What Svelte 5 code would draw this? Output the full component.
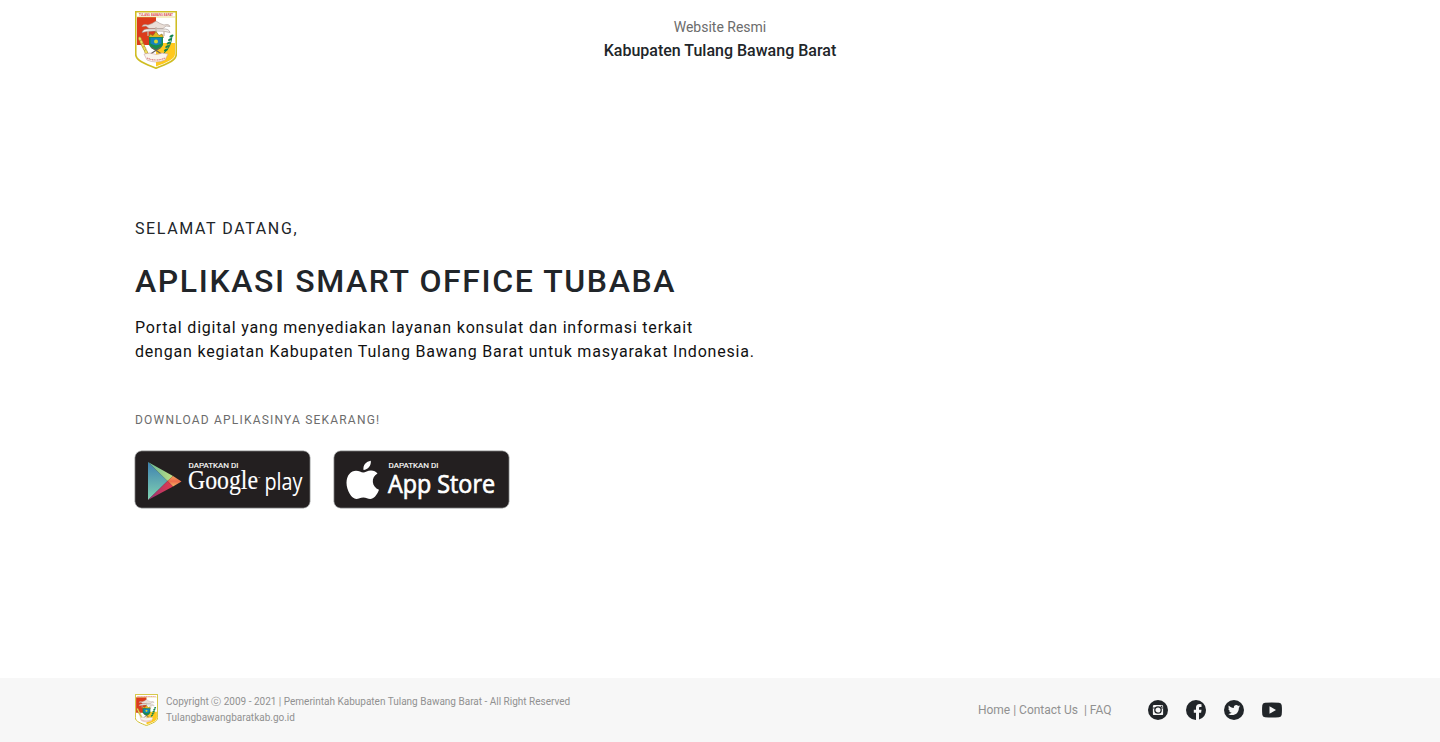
<script>
  const lines = [
    'Portal digital yang menyediakan layanan konsulat dan informasi terkait',
    'dengan kegiatan Kabupaten Tulang Bawang Barat untuk masyarakat Indonesia.'
  ];
  const leaves = [0, 1, 2, 3, 4];
</script>

{#snippet crest(cls)}
  <svg class={cls} viewBox="0 0 42 58" preserveAspectRatio="none" aria-label="Tulang Bawang Barat">
    <path d="M.7.7H41.3V43C41.3 50 31 53 21 57.2C11 53 .7 50 .7 43Z" fill="#fff" />
    <path d="M2 6H21V34H2Z" fill="#dc3b1c" />
    <path d="M21 32H40V43C40 48.5 31 51.5 21 55.5Z" fill="#ffc81c" />
    <text x="4" y="5" textLength="34" lengthAdjust="spacingAndGlyphs" class="crest-title">TULANG BAWANG BARAT</text>
    <path d="M2 6H40" stroke="#d9c943" stroke-width=".6" />
    <path d="M7 15.5Q8 12.5 13 14L17 12.5L21 10L25 12.5L29 14Q34 12.5 35 15.5L31 15L28 17.5H14L11 15Z" fill="#eadfd8" stroke="#a99a94" stroke-width=".6" />
    <path d="M7 21.5Q8 17.5 14 18H28Q34 17.5 35 21.5Q29 19.6 21 20Q13 19.6 7 21.5Z" fill="#f5f1ec" stroke="#9c8f8c" stroke-width=".6" />
    <path d="M13 20V25M29 20V25M21 16V24" stroke="#c8b8ab" stroke-width="1.3" />
    <path d="M13.5 26.5L15 23L18 24.5L21 20.5L24 24.5L27 23L28.5 26.5Z" fill="#e3b820" stroke="#806b24" stroke-width=".6" />
    <path d="M14 26H28V34Q26 38 21 39.5Q16 38 14 34Z" fill="#178b4e" />
    <path d="M15.5 26.8H26.5V32.5Q21 36 15.5 32.5Z" fill="#1684bc" />
    <circle cx="21" cy="30.5" r="2" fill="#d4d830" />
    <path d="M14 43Q6 37 5 27" fill="none" stroke="#d5c63d" stroke-width="1" />
    <path d="M28 43Q36 37 37 25" fill="none" stroke="#168454" stroke-width="1" />
    {#each leaves as n}
      <ellipse cx={5 + n * 1.5} cy={28 + n * 3.2} rx="1.4" ry="2.2" transform={`rotate(-24 ${5 + n * 1.5} ${28 + n * 3.2})`} fill="#f1df5c" stroke="#a08b2c" stroke-width=".5" />
      <ellipse cx={36.5 - n * 1.4} cy={25 + n * 3.5} rx="2.2" ry="1.2" transform={`rotate(-24 ${36.5 - n * 1.4} ${25 + n * 3.5})`} fill="#14834f" />
    {/each}
    <path d="M14 44L26 36M28 44L16 36" stroke="#6d6259" stroke-width="1.2" />
    <path d="M9 43L15 42Q21 45 27 42L33 43L30 49Q21 53 12 49Z" fill="#faf4ec" stroke="#c9a3a2" stroke-width=".6" />
    <path d="M12 47Q21 51 30 47" fill="none" stroke="#d98080" stroke-width="1.2" stroke-dasharray="1.2 .5" />
    <path d="M.7.7H41.3V43C41.3 50 31 53 21 57.2C11 53 .7 50 .7 43Z" fill="none" stroke="#cfbd22" stroke-width="1.7" />
  </svg>
{/snippet}

<div class="page">
  <header>
    {@render crest('logo')}
    <div class="official">
      <span>Website Resmi</span>
      <strong>Kabupaten Tulang Bawang Barat</strong>
    </div>
  </header>

  <main>
    <p class="welcome">SELAMAT DATANG,</p>
    <h1>APLIKASI SMART OFFICE TUBABA</h1>
    <p class="intro">{lines[0]}<br />{lines[1]}</p>
    <p class="download">DOWNLOAD APLIKASINYA SEKARANG!</p>
    <div class="stores">
      <svg class="badge" viewBox="0 0 177 59">
        <defs>
          <linearGradient id="blue" x2="0" y2="1"><stop stop-color="#3d7fb0" /><stop offset="1" stop-color="#82d4b2" /></linearGradient>
          <linearGradient id="green"><stop stop-color="#62b799" /><stop offset="1" stop-color="#c0df83" /></linearGradient>
          <linearGradient id="orange" x2="0" y2="1"><stop stop-color="#f2a35b" /><stop offset=".5" stop-color="#ee6b4b" /><stop offset="1" stop-color="#f5b565" /></linearGradient>
          <linearGradient id="pink"><stop stop-color="#963278" /><stop offset="1" stop-color="#e63c4c" /></linearGradient>
        </defs>
        <rect x=".8" y=".8" width="175.4" height="57.4" rx="7" fill="#231f20" stroke="#c9cccb" stroke-width=".7" />
        <path d="M14 12V50L33.5 31Z" fill="url(#blue)" />
        <path d="M14 12L39 26L33.5 31Z" fill="url(#green)" />
        <path d="M39 26L47.5 31.5L39 36.5L33.5 31Z" fill="url(#orange)" />
        <path d="M14 50L33.5 31L39 36.5Z" fill="url(#pink)" />
        <text class="get" x="54.5" y="17.9" textLength="50" lengthAdjust="spacingAndGlyphs">DAPATKAN DI</text>
        <text class="google" x="54" y="39.4" textLength="70" lengthAdjust="spacingAndGlyphs">Google</text>
        <text class="tm" x="124" y="29.5">™</text>
        <text class="play" x="130.5" y="39.5" textLength="38" lengthAdjust="spacingAndGlyphs">play</text>
      </svg>
      <svg class="badge" viewBox="0 0 177 59">
        <rect x=".8" y=".8" width="175.4" height="57.4" rx="7" fill="#231f20" stroke="#c9cccb" stroke-width=".7" />
        <path fill="#fff" d="M30.5 20C29.8 15.2 33.2 11.5 37.8 10.8C38.4 15.7 35 19.8 30.5 20ZM44.5 23.5C37.5 27.5 38.6 36.8 46 39.8C44 45.2 40.6 49 37.3 49C34.8 49 33.2 47.6 30.3 47.6C27.3 47.6 25.7 49 23.3 49C18.8 49 13.5 40.6 13.5 32.8C13.5 25.2 18 20.8 23 20.8C26 20.8 28.2 22.5 30.2 22.5C32.2 22.5 34.7 20.5 38 20.5C40.7 20.5 43 21.5 44.5 23.5Z" />
        <text class="get" x="55.5" y="17.9" textLength="50" lengthAdjust="spacingAndGlyphs">DAPATKAN DI</text>
        <text class="app" x="55" y="43" textLength="107" lengthAdjust="spacingAndGlyphs">App Store</text>
      </svg>
    </div>
  </main>

  <footer>
    {@render crest('mini')}
    <div class="copyright">Copyright ⓒ 2009 - 2021 | Pemerintah Kabupaten Tulang Bawang Barat - All Right Reserved<br />Tulangbawangbaratkab.go.id</div>
    <nav>Home | Contact Us&nbsp; | FAQ</nav>
    <div class="social">
      <svg viewBox="0 0 20 20"><circle cx="10" cy="10" r="10" fill="#212529" /><rect x="4.9" y="4.9" width="10.2" height="10.2" rx="1.2" fill="#f7f7f7" /><path d="M5 8H15" stroke="#212529" stroke-width=".9" /><circle cx="10" cy="10" r="3.2" fill="#f7f7f7" stroke="#212529" stroke-width="1.3" /><path d="M12.7 5.7H14.3V7.2H12.7Z" fill="#212529" /></svg>
      <svg viewBox="0 0 20 20"><path fill="#212529" d="M20 10A10 10 0 1 0 10 20V12.7H7.8V9.8H10V7.8C10 5.4 11.4 4.1 13.6 4.1L15.5 4.3V6.9H14.2C13.2 6.9 13 7.4 13 8.2V9.8H15.5L15.1 12.7H13V19.5A10 10 0 0 0 20 10Z" /></svg>
      <svg viewBox="0 0 20 20"><circle cx="10" cy="10" r="10" fill="#212529" /><path fill="#f7f7f7" d="M16 6.3L14.8 6.6C15.2 6.3 15.5 5.8 15.7 5.3L14.2 5.9C12.5 4.1 9.4 5.3 9.8 8C7.8 7.9 6 6.9 4.8 5.4C4.2 6.6 4.5 8 5.5 8.7L4.4 8.4C4.4 9.7 5.3 10.7 6.4 11L5.3 11.1C5.6 12.1 6.5 12.8 7.7 12.8C6.7 13.6 5.5 14 4.1 13.9C9.1 17 15 13.8 14.9 7.7Q15.6 7.1 16 6.3Z" /></svg>
      <svg viewBox="0 0 20 20"><path fill="#212529" d="M3 2.8Q10 2.1 17 2.8Q19.5 3 19.7 5.3Q20.2 10 19.7 14.8Q19.5 17 17 17.2Q10 17.9 3 17.2Q.5 17 .3 14.8Q-.2 10 .3 5.3Q.5 3 3 2.8Z" /><path d="M7.5 6.3L14 10L7.5 13.7Z" fill="#f7f7f7" /></svg>
    </div>
  </footer>
</div>

<style>
  :global(body) { margin: 0; background: #fff; }
  .page { display: flex; flex-direction: column; height: 742px; overflow: hidden; font-family: Roboto, sans-serif; color: #212529; }
  header { display: grid; grid-template-columns: 1fr auto 1fr; height: 80px; padding: 0 135px; align-items: center; box-sizing: border-box; }
  .logo { width: 42px; height: 58px; }
  .official { display: flex; flex-direction: column; align-items: center; }
  .official span { font-size: 14px; line-height: 20px; padding-bottom: 2px; color: #6c6c6c; }
  .official strong { font-size: 16px; line-height: 24px; font-weight: 500; }
  main { flex: 1; padding: 137px 135px 0; }
  p, h1 { margin: 0; }
  .welcome { font-size: 16px; line-height: 24px; letter-spacing: 1.6px; }
  h1 { margin-top: 21px; font-size: 32px; line-height: 38px; font-weight: 500; letter-spacing: 1.6px; }
  .intro { margin-top: 16px; font-size: 16px; line-height: 24px; letter-spacing: .8px; color: #111; }
  .download { margin-top: 47px; font-size: 12px; line-height: 18px; letter-spacing: 1.2px; color: #6c6c6c; }
  .stores { display: flex; gap: 22px; margin: 21px 0 0 -1px; }
  .badge { width: 177px; height: 59px; }
  .badge text { fill: #fff; }
  .badge .get { font: 400 8px Roboto, sans-serif; stroke: #fff; stroke-width: .15px; }
  .badge .google { font: 26.5px "Liberation Serif", serif; stroke: #fff; stroke-width: .15px; }
  .badge .play { font: 400 24px "Open Sans", sans-serif; }
  .badge .tm { font: 4px Roboto, sans-serif; }
  .badge .app { font: 500 25px "Open Sans", sans-serif; stroke: #fff; stroke-width: .7px; }
  .crest-title { font: 700 3.4px "Liberation Sans", sans-serif; fill: #d74b43; }
  footer { display: flex; align-items: center; height: 64px; box-sizing: border-box; padding: 0 158px 0 135px; background: #f7f7f7; color: #919191; }
  .mini { width: 23px; height: 32px; }
  .copyright { margin-left: 8px; font-size: 10px; line-height: 16px; white-space: nowrap; }
  nav { margin-left: auto; font-size: 12px; line-height: 18px; white-space: nowrap; }
  .social { display: flex; gap: 18px; margin-left: 36.5px; }
  .social svg { width: 20px; height: 20px; }
</style>
